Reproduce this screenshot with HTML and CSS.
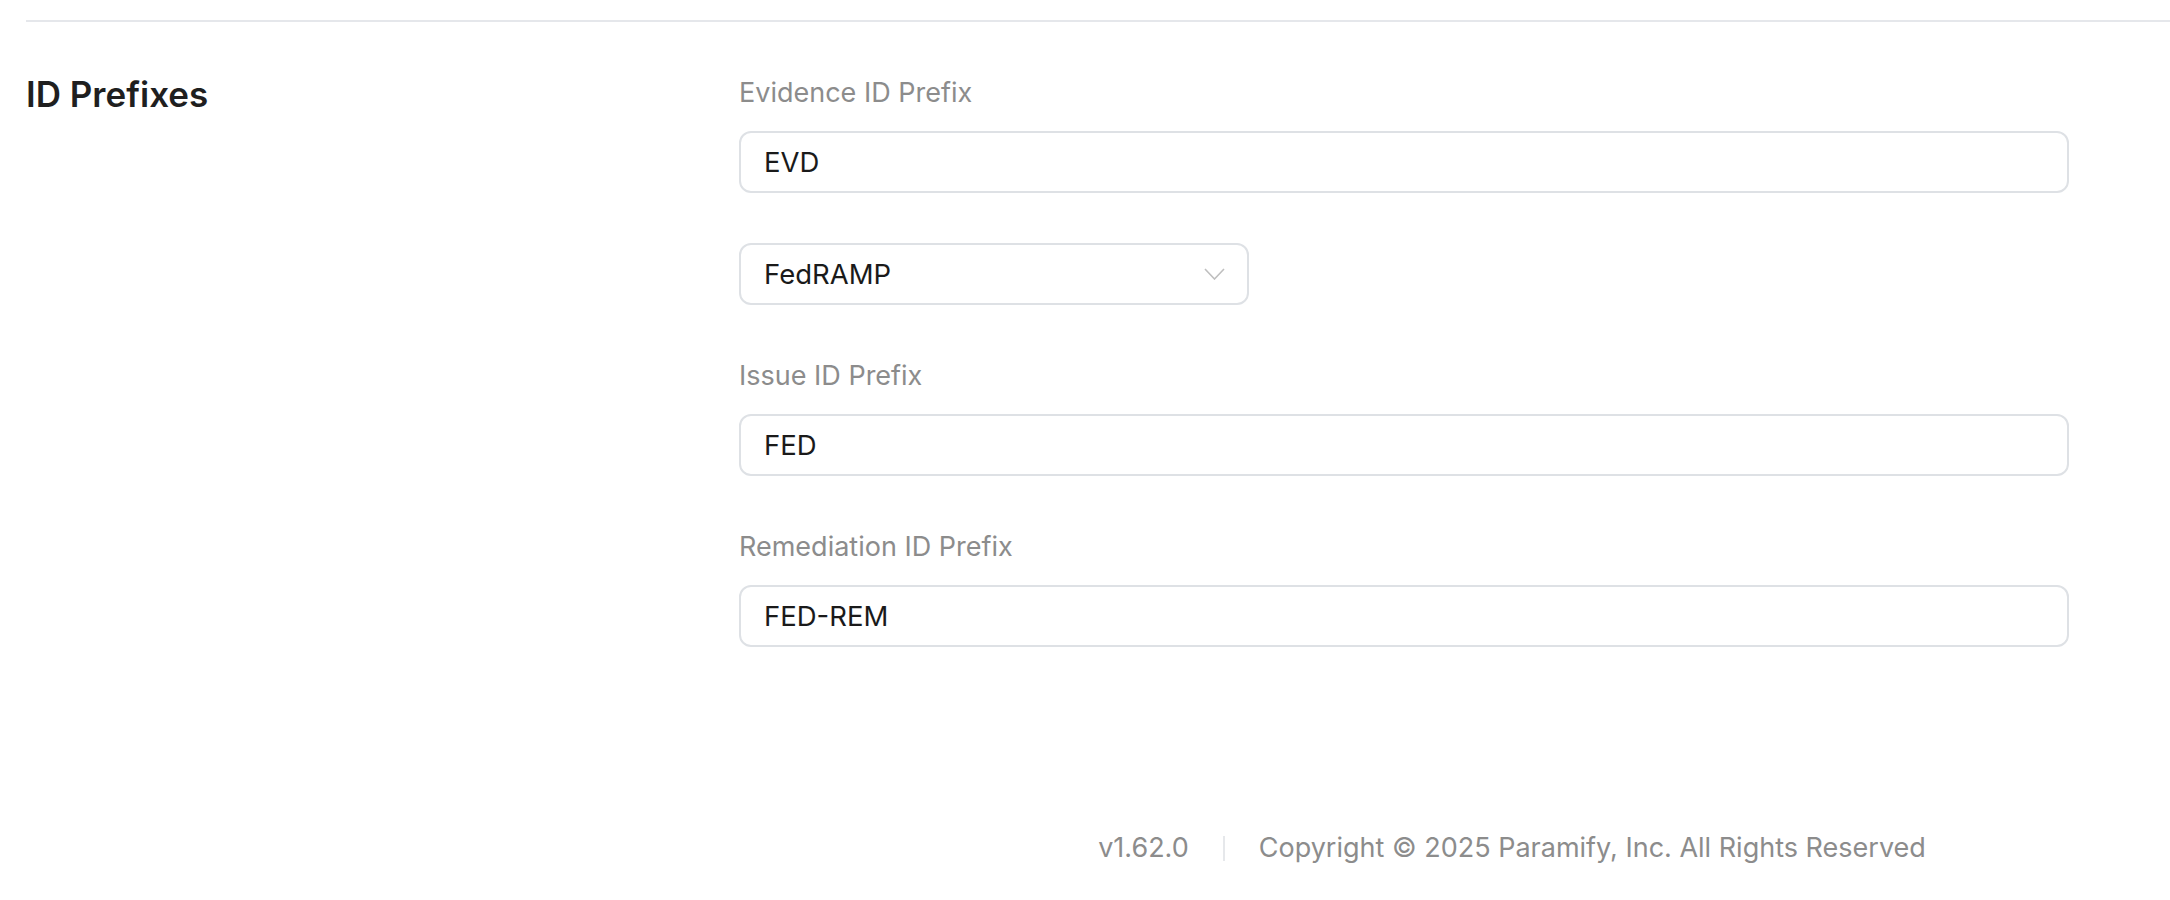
FILE: index.html
```html
<!DOCTYPE html>
<html lang="en">
<head>
  <meta charset="UTF-8" />
  <meta name="viewport" content="width=device-width, initial-scale=1" />
  <title>Settings - ID Prefixes</title>
  <link rel="stylesheet" href="styles.css">
</head>
<body>
  <div class="page">
    <div class="divider"></div>

    <section class="settings-section">
      <h2 class="section-title">ID Prefixes</h2>

      <div class="form">
        <div class="form-item">
          <label class="form-label" for="evidence-prefix">Evidence ID Prefix</label>
          <input class="text-input" id="evidence-prefix" type="text" value="EVD" />
        </div>

        <div class="form-item">
          <div class="select">
            <span class="select-value">FedRAMP</span>
            <svg class="select-arrow" width="21" height="12" viewBox="0 0 21 12">
              <polyline points="1,1 10.5,11 20,1" fill="none" stroke="#bfbfbf" stroke-width="1.6" />
            </svg>
          </div>
        </div>

        <div class="form-item">
          <label class="form-label" for="issue-prefix">Issue ID Prefix</label>
          <input class="text-input" id="issue-prefix" type="text" value="FED" />
        </div>

        <div class="form-item">
          <label class="form-label" for="remediation-prefix">Remediation ID Prefix</label>
          <input class="text-input" id="remediation-prefix" type="text" value="FED-REM" />
        </div>
      </div>
    </section>
  </div>

  <footer class="footer">
    <span>v1.62.0</span>
    <span class="footer-sep"></span>
    <span>Copyright &copy; 2025 Paramify, Inc. All Rights Reserved</span>
  </footer>
</body>
</html>
```

FILE: styles.css
```css
body {
  margin: 0;
  padding: 0;
  background: #fff;
  color: #1f1f1f;
  font-family: Inter, "Noto Sans", sans-serif;
}
.page {
  padding-left: 26px;
}
.divider {
  margin-top: 20px;
  height: 2px;
  background: #e5e7eb;
}
.settings-section {
  display: grid;
  grid-template-columns: 665px 1330px;
  column-gap: 48px;
  padding-top: 50px;
}
.section-title {
  margin: 0;
  font-size: 35px;
  line-height: 44px;
  font-weight: 600;
  color: #1f1f1f;
}
.form {
  display: flex;
  flex-direction: column;
}
.form-item {
  display: flex;
  flex-direction: column;
  margin-bottom: 50px;
}
.form-item:last-child {
  margin-bottom: 0;
}
.form-label {
  font-size: 27px;
  line-height: 42px;
  color: #8c8c8c;
  margin-bottom: 17px;
}
.text-input {
  box-sizing: border-box;
  width: 100%;
  height: 62px;
  padding: 0 23px;
  border: 2px solid #dee1e5;
  border-radius: 12px;
  background: #fff;
  color: #1a1a1a;
  font-family: Inter, "Noto Sans", sans-serif;
  font-size: 27.5px;
  outline: none;
}
.select {
  box-sizing: border-box;
  width: 510px;
  height: 62px;
  padding: 0 22px 0 23px;
  border: 2px solid #dee1e5;
  border-radius: 12px;
  display: flex;
  align-items: center;
  justify-content: space-between;
  cursor: pointer;
}
.select-value {
  font-size: 27.5px;
  color: #1a1a1a;
}
.select-arrow {
  display: block;
}
.footer {
  display: flex;
  justify-content: center;
  align-items: center;
  padding-left: 854px;
  margin-top: 181px;
  font-size: 27px;
  line-height: 40px;
  color: #8c8c8c;
}
.footer-sep {
  width: 2px;
  height: 25px;
  background: #e6e8eb;
  margin: 0 34px;
}
```
